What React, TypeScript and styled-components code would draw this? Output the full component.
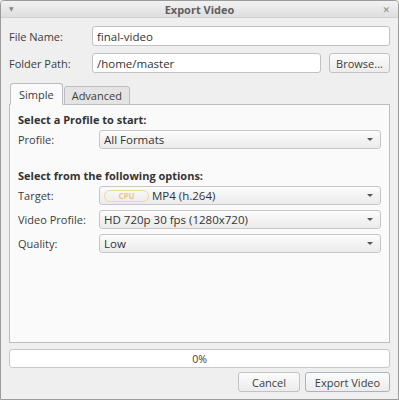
import styled, { createGlobalStyle } from "styled-components";

const Global = createGlobalStyle`
  html, body {
    margin: 0;
    padding: 0;
    background: #efefef;
  }
  body {
    font-family: "Open Sans", "DejaVu Sans", sans-serif;
    font-size: 11px;
    color: #3c3c3c;
  }
`;

const Window = styled.div`
  box-sizing: border-box;
  width: 399px;
  height: 400px;
  border: 1px solid #9b9b9b;
  border-radius: 4px 4px 0 0;
  background: #efefef;
  display: flex;
  flex-direction: column;
  overflow: hidden;
`;

const TitleBar = styled.div`
  height: 17px;
  display: flex;
  align-items: center;
  justify-content: space-between;
  padding: 0 8px 0 8px;
  background: linear-gradient(#f2f2f2, #dedede);
  border-bottom: 1px solid #d0d0d0;
  font-weight: bold;
  color: #5e5e5e;
  font-size: 11px;
`;

const TitleIcon = styled.span<{ $right?: boolean }>`
  width: 12px;
  color: #8a8a8a;
  font-size: ${(p) => (p.$right ? 9 : 6)}px;
  font-weight: normal;
  text-align: ${(p) => (p.$right ? "right" : "left")};
`;

const Body = styled.div`
  flex: 1;
  display: flex;
  flex-direction: column;
  padding: 8px 8px 7px 8px;
`;

const FormGrid = styled.div`
  display: grid;
  grid-template-columns: 83px 1fr;
  row-gap: 7px;
  align-items: center;
`;

const Label = styled.label`
  white-space: nowrap;
`;

const PathRow = styled.div`
  display: flex;
  gap: 8px;
`;

const TextInput = styled.div`
  flex: 1;
  box-sizing: border-box;
  height: 20px;
  display: flex;
  align-items: center;
  padding: 0 4px;
  background: #fff;
  border: 1px solid #c2c2c2;
  border-radius: 3px;
  color: #333;
  font-size: 11.5px;
`;

const Button = styled.button<{ $w: number; $default?: boolean }>`
  box-sizing: border-box;
  width: ${(p) => p.$w}px;
  height: 20px;
  padding: 0;
  font-family: inherit;
  font-size: 11px;
  color: #3c3c3c;
  background: linear-gradient(#fcfcfc, #ececec);
  border: 1px solid ${(p) => (p.$default ? "#a9b4c2" : "#c2c2c2")};
  border-radius: 3px;
`;

const Tabs = styled.div`
  margin-top: 10px;
  display: flex;
  align-items: flex-end;
  padding-left: 1px;
  position: relative;
  z-index: 1;
`;

const Tab = styled.div<{ $active?: boolean }>`
  box-sizing: border-box;
  height: ${(p) => (p.$active ? 22 : 19)}px;
  padding: 0 ${(p) => (p.$active ? 8 : 7)}px;
  display: flex;
  align-items: center;
  border: 1px solid #bdbdbd;
  border-bottom: ${(p) => (p.$active ? "1px solid #fafafa" : "1px solid #bdbdbd")};
  border-radius: 3px 3px 0 0;
  background: ${(p) => (p.$active ? "#fafafa" : "#e4e4e4")};
  margin-right: 1px;
  margin-bottom: -1px;
  font-size: 11px;
`;

const Panel = styled.div`
  box-sizing: border-box;
  height: 239px;
  border: 1px solid #bdbdbd;
  background: #fafafa;
  padding: 7px 8px;
  display: flex;
  flex-direction: column;
`;

const Section = styled.div`
  font-weight: bold;
  color: #333;
  margin-bottom: 3px;
  font-size: 11px;
`;

const OptGrid = styled.div`
  display: grid;
  grid-template-columns: 81px 1fr;
  row-gap: 5px;
  align-items: center;
  margin-bottom: 19px;
`;

const Combo = styled.div`
  box-sizing: border-box;
  height: 19px;
  display: flex;
  align-items: center;
  gap: 3px;
  padding: 0 5px 0 4px;
  background: linear-gradient(#fbfbfb, #ebebeb);
  border: 1px solid #c6c6c6;
  border-radius: 3px;
  color: #333;
  font-size: 11.5px;
`;

const ComboText = styled.span`
  flex: 1;
`;

const Arrow = styled.span`
  width: 0;
  height: 0;
  border-left: 3px solid transparent;
  border-right: 3px solid transparent;
  border-top: 3px solid #555;
  margin-right: 2px;
`;

const Pill = styled.span`
  box-sizing: border-box;
  width: 45px;
  height: 12px;
  display: flex;
  align-items: center;
  justify-content: center;
  border: 1px solid #f1d89c;
  border-radius: 7px;
  color: #e9c886;
  font-size: 8px;
  font-weight: bold;
`;

const Progress = styled.div`
  margin-top: 6px;
  box-sizing: border-box;
  height: 19px;
  display: flex;
  align-items: center;
  justify-content: center;
  background: #fff;
  border: 1px solid #c8c8c8;
  border-radius: 3px;
  font-size: 10.5px;
`;

const Footer = styled.div`
  margin-top: 4px;
  display: flex;
  justify-content: flex-end;
  gap: 5px;
`;

const options = [
  { label: "Target:", value: "MP4 (h.264)", pill: true },
  { label: "Video Profile:", value: "HD 720p 30 fps (1280x720)" },
  { label: "Quality:", value: "Low" },
];

export default function App() {
  return (
    <Window>
      <Global />
      <TitleBar>
        <TitleIcon>▼</TitleIcon>
        <span>Export Video</span>
        <TitleIcon $right>✕</TitleIcon>
      </TitleBar>
      <Body>
        <FormGrid>
          <Label>File Name:</Label>
          <TextInput>final-video</TextInput>
          <Label>Folder Path:</Label>
          <PathRow>
            <TextInput>/home/master</TextInput>
            <Button $w={61}>Browse...</Button>
          </PathRow>
        </FormGrid>
        <Tabs>
          <Tab $active>Simple</Tab>
          <Tab>Advanced</Tab>
        </Tabs>
        <Panel>
          <Section>Select a Profile to start:</Section>
          <OptGrid>
            <Label>Profile:</Label>
            <Combo>
              <ComboText>All Formats</ComboText>
              <Arrow />
            </Combo>
          </OptGrid>
          <Section>Select from the following options:</Section>
          <OptGrid>
            {options.map((o) => (
              <>
                <Label key={o.label}>{o.label}</Label>
                <Combo key={o.value}>
                  {o.pill && <Pill>CPU</Pill>}
                  <ComboText>{o.value}</ComboText>
                  <Arrow />
                </Combo>
              </>
            ))}
          </OptGrid>
        </Panel>
        <Progress>0%</Progress>
        <Footer>
          <Button $w={62}>Cancel</Button>
          <Button $w={85} $default>
            Export Video
          </Button>
        </Footer>
      </Body>
    </Window>
  );
}
